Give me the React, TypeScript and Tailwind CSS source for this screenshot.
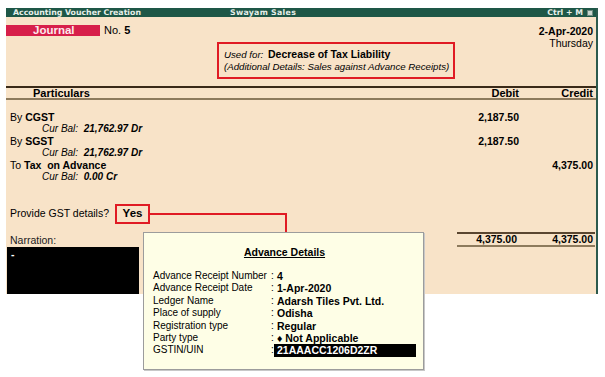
const entries = [
  { prefix: 'By', name: 'CGST', bal: '21,762.97 Dr', debit: '2,187.50', credit: '' },
  { prefix: 'By', name: 'SGST', bal: '21,762.97 Dr', debit: '2,187.50', credit: '' },
  { prefix: 'To', name: 'Tax  on Advance', bal: '0.00 Cr', debit: '', credit: '4,375.00' },
];

const details = [
  { label: 'Advance Receipt Number', value: '4' },
  { label: 'Advance Receipt Date', value: '1-Apr-2020' },
  { label: 'Ledger Name', value: 'Adarsh Tiles Pvt. Ltd.' },
  { label: 'Place of supply', value: 'Odisha' },
  { label: 'Registration type', value: 'Regular' },
  { label: 'Party type', value: '♦ Not Applicable' },
];

export default function App() {
  return (
    <div className="relative w-[605px] h-[377px] bg-white overflow-hidden font-['Liberation_Sans',Arial,sans-serif] text-[10.5px] text-black whitespace-nowrap">
      <div className="ml-[6px] mt-[8px] w-[592px] h-[286px] bg-[#f8e3c8] border-r-2 border-[#2c5a4d] flex flex-col">
        {/* title bar */}
        <div className="h-[9px] bg-[#1e5747] flex items-center text-[#e6efe9] font-['DejaVu_Sans',Verdana,sans-serif] font-bold text-[7.8px] leading-[9px]">
          <span className="pl-[7px] w-[224px]">Accounting Voucher Creation</span>
          <span className="tracking-[0.3px]">Swayam Sales</span>
          <span className="ml-auto pr-[3px] flex items-center gap-[4px]">
            Ctrl + M
            <span className="w-[6px] h-[6px] bg-[#c9d6cf] border border-[#6e8a80]" />
          </span>
        </div>

        {/* voucher header */}
        <div className="h-[69px] flex items-start">
          <div className="w-[211px] pt-[8px] flex items-center">
            <div className="w-[94px] h-[11px] bg-[#d71f4a] text-[#fde8ec] font-bold text-[11.5px] leading-[11px] pl-[27px]">Journal</div>
            <span className="ml-[4px] leading-[11px] text-[11px]">No. <b>5</b></span>
          </div>
          <div className="mt-[25px] w-[238px] h-[37px] border-2 border-[#e01b24] flex flex-col justify-center pl-[5px] leading-[12px] text-[9.7px]">
            <div><i>Used for:</i> <b className="ml-[2px] text-[10.5px]">Decrease of Tax Liability</b></div>
            <div className="italic">(Additional Details: Sales against Advance Receipts)</div>
          </div>
          <div className="flex-1 flex flex-col items-end pr-[3px] pt-[8px] leading-[12px] text-[10.5px]">
            <b>2-Apr-2020</b>
            <span>Thursday</span>
          </div>
        </div>

        {/* column headings */}
        <div className="border-t-2 border-[#3a2a18] border-b-2 border-b-[#8d7a5c] h-[14px] flex items-center font-bold text-[11px] leading-[10px]">
          <span className="pl-[27px]">Particulars</span>
          <span className="ml-auto w-[60px] text-right pr-[2px]">Debit</span>
          <span className="w-[75px] text-right pr-[3px]">Credit</span>
        </div>

        {/* entries */}
        <div className="pt-[11px] leading-[12px]">
          {entries.map((e) => (
            <div key={e.name}>
              <div className="flex">
                <span className="pl-[4px] whitespace-pre">{e.prefix} <b>{e.name}</b></span>
                <span className="ml-auto w-[100px] text-right font-bold pr-[2px]">{e.debit}</span>
                <span className="w-[75px] text-right pr-[3px] font-bold">{e.credit}</span>
              </div>
              <div className="pl-[36px] italic text-[10px]">
                Cur Bal:&nbsp; <b>{e.bal}</b>
              </div>
            </div>
          ))}
        </div>

        {/* gst prompt */}
        <div className="mt-[21px] flex items-center h-[20px]">
          <span className="pl-[4px]">Provide GST details?</span>
          <span className="ml-[6px] w-[35px] h-[20px] border-2 border-[#e01b24] flex items-center justify-center font-bold text-[11.5px]">Yes</span>
        </div>

        {/* narration and totals */}
        <div className="flex-1 flex items-start">
          <div className="w-[133px] pt-[10px] flex flex-col">
            <span className="pl-[4px] leading-[12px] text-[#202020]">Narration:</span>
            <div className="mt-[1px] ml-[1px] h-[47px] bg-black text-white font-bold pl-[4px] leading-[14px]">-</div>
          </div>
          <div className="ml-auto mt-[8px] w-[138px] mr-[1px] border-t-2 border-[#5a4630] border-b-2 border-b-[#8d7a5c] h-[15px] flex items-center font-bold leading-[11px]">
            <span className="w-[60px] text-right">4,375.00</span>
            <span className="flex-1 text-right pr-[2px]">4,375.00</span>
          </div>
        </div>
      </div>

      {/* connector from Yes to popup */}
      <div className="absolute left-[149px] top-[213px] w-[138px] h-[2px] bg-[#e01b24]" />
      <div className="absolute left-[285px] top-[213px] w-[2px] h-[20px] bg-[#e01b24]" />

      {/* advance details popup */}
      <div className="absolute left-[143px] top-[232px] w-[281px] h-[138px] bg-[#fefee6] border border-[#9c9c9c] shadow-[1px_1px_0_#c8c8c8]">
        <div className="text-center font-bold underline mt-[13px] leading-[12px] pl-[2px] text-[10.5px]">Advance Details</div>
        <div className="mt-[12px] pl-[9px] leading-[12.4px] text-[10px]">
          {details.map((d) => (
            <div key={d.label} className="flex">
              <span className="w-[118px]">{d.label}</span>
              <span className="w-[6px]">:</span>
              <span className="font-bold text-[10.5px]">{d.value}</span>
            </div>
          ))}
          <div className="flex">
            <span className="w-[118px]">GSTIN/UIN</span>
            <span className="w-[3px]">:</span>
            <span className="w-[142px] bg-black text-white font-bold pl-[3px] text-[10.5px]">21AAACC1206D2ZR</span>
          </div>
        </div>
      </div>
    </div>
  );
}
